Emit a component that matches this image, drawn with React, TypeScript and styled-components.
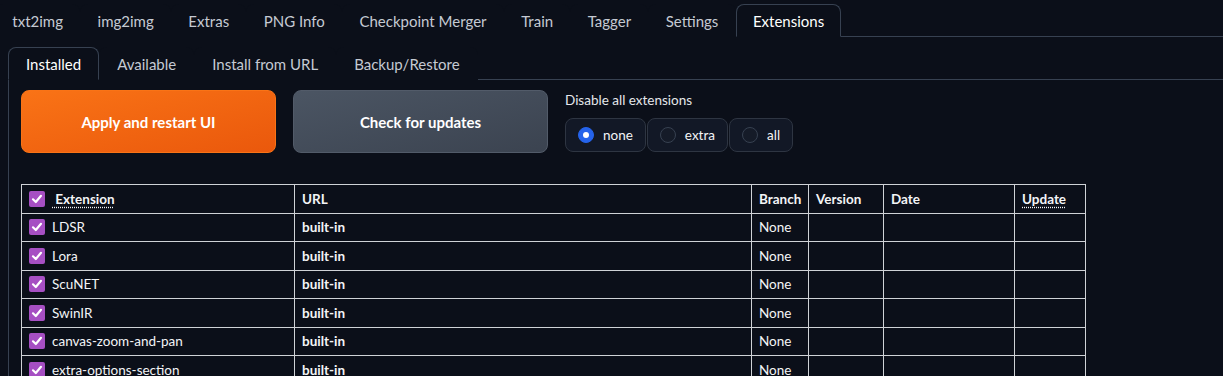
import React, { useState } from 'react'
import styled, { createGlobalStyle } from 'styled-components'

const GlobalStyle = createGlobalStyle`
  html, body {
    margin: 0;
    padding: 0;
    background: #0b0f19;
    overflow: hidden;
  }
  body {
    font-family: Lato, 'Liberation Sans', sans-serif;
    color: #f3f4f6;
  }
`

const Page = styled.div`
  width: 1223px;
  height: 376px;
  overflow: hidden;
  background: #0b0f19;
`

const TabNav = styled.div<{ $top?: boolean }>`
  display: flex;
  border-bottom: 1px solid #374151;
  padding-top: ${({ $top }) => ($top ? '4px' : '10px')};
  margin-left: ${({ $top }) => ($top ? '-5px' : '0')};
`

const Tab = styled.button<{ $active?: boolean; $pad: number }>`
  font-family: inherit;
  font-size: 15px;
  height: 33px;
  padding: 0 ${({ $pad }) => $pad}px;
  margin-bottom: -1px;
  background: #0b0f19;
  color: ${({ $active }) => ($active ? '#ffffff' : '#c5cad3')};
  border: 1px solid ${({ $active }) => ($active ? '#374151' : 'transparent')};
  border-bottom-color: ${({ $active }) => ($active ? '#0b0f19' : 'transparent')};
  border-radius: 8px 8px 0 0;
  cursor: pointer;
`

const SubArea = styled.div`
  padding-left: 8px;
`

const Panel = styled.div`
  border-left: 1px solid #374151;
  padding: 10px 12px 0 12px;
  height: 300px;
`

const TopRow = styled.div`
  display: flex;
  align-items: flex-start;
  gap: 17px;
`

const BigButton = styled.button<{ $primary?: boolean }>`
  width: 255px;
  height: 63px;
  border-radius: 8px;
  font-family: inherit;
  font-size: 15px;
  font-weight: 700;
  color: #ffffff;
  cursor: pointer;
  border: 1px solid ${({ $primary }) => ($primary ? '#f97316' : '#525b69')};
  background: ${({ $primary }) =>
    $primary
      ? 'linear-gradient(to bottom right, #f97316, #ea580c)'
      : 'linear-gradient(to bottom right, #4b5563, #3b4350)'};
`

const RadioBlock = styled.div`
  display: flex;
  flex-direction: column;
  gap: 10px;
  padding-top: 2px;
`

const RadioLabel = styled.div`
  font-size: 13.5px;
  color: #e5e7eb;
`

const RadioGroup = styled.div`
  display: flex;
  gap: 1px;
`

const RadioOption = styled.label`
  display: flex;
  align-items: center;
  gap: 9px;
  height: 34px;
  box-sizing: border-box;
  padding: 0 12px 0 12px;
  border: 1px solid #2e3542;
  border-radius: 8px;
  background: #121826;
  font-size: 13.5px;
  color: #f3f4f6;
  cursor: pointer;
`

const RadioDot = styled.span<{ $checked?: boolean }>`
  width: 16px;
  height: 16px;
  border-radius: 50%;
  box-sizing: border-box;
  display: flex;
  align-items: center;
  justify-content: center;
  background: ${({ $checked }) => ($checked ? '#2563eb' : '#151b28')};
  border: 1px solid ${({ $checked }) => ($checked ? '#2563eb' : '#374151')};
  &::after {
    content: '';
    display: ${({ $checked }) => ($checked ? 'block' : 'none')};
    width: 6px;
    height: 6px;
    border-radius: 50%;
    background: #ffffff;
  }
`

const Table = styled.table`
  margin-top: 31px;
  border-collapse: collapse;
  width: 1064px;
  table-layout: fixed;
  font-size: 13.5px;
  color: #f3f4f6;
`

const Th = styled.th<{ $w: number }>`
  box-sizing: border-box;
  width: ${({ $w }) => $w}px;
  border: 1px solid #cfd2d6;
  height: 28.5px;
  padding: 0 7px;
  text-align: left;
  font-weight: 700;
`

const Td = styled.td<{ $bold?: boolean }>`
  box-sizing: border-box;
  border: 1px solid #cfd2d6;
  height: 28.5px;
  padding: 0 7px;
  font-weight: ${({ $bold }) => ($bold ? 700 : 400)};
  white-space: nowrap;
`

const NameCell = styled.div`
  display: flex;
  align-items: center;
  gap: 7px;
`

const Abbr = styled.abbr`
  text-decoration: underline dotted;
  text-underline-offset: 3px;
`

const CheckBox = styled.span`
  width: 16px;
  height: 16px;
  border-radius: 2px;
  background: #a64fc3;
  display: inline-flex;
  align-items: center;
  justify-content: center;
  flex-shrink: 0;
`

const Check = () => (
  <CheckBox>
    <svg width="12" height="12" viewBox="0 0 12 12">
      <path d="M2 6.3 L4.8 9 L10 2.8" fill="none" stroke="#fff" strokeWidth="2.2" strokeLinecap="round" strokeLinejoin="round" />
    </svg>
  </CheckBox>
)

const topTabs = ['txt2img', 'img2img', 'Extras', 'PNG Info', 'Checkpoint Merger', 'Train', 'Tagger', 'Settings', 'Extensions']
const subTabs = ['Installed', 'Available', 'Install from URL', 'Backup/Restore']
const extensions = [
  'LDSR',
  'Lora',
  'ScuNET',
  'SwinIR',
  'canvas-zoom-and-pan',
  'extra-options-section',
  'hypertile',
  'mobile',
]

const App = () => {
  const [disable, setDisable] = useState('none')

  return (
    <Page>
      <GlobalStyle />
      <TabNav $top>
        {topTabs.map((t) => (
          <Tab key={t} $pad={16.3} $active={t === 'Extensions'}>{t}</Tab>
        ))}
      </TabNav>
      <SubArea>
        <TabNav>
          {subTabs.map((t) => (
            <Tab key={t} $pad={17} $active={t === 'Installed'}>{t}</Tab>
          ))}
        </TabNav>
        <Panel>
          <TopRow>
            <BigButton $primary>Apply and restart UI</BigButton>
            <BigButton>Check for updates</BigButton>
            <RadioBlock>
              <RadioLabel>Disable all extensions</RadioLabel>
              <RadioGroup>
                {['none', 'extra', 'all'].map((o) => (
                  <RadioOption key={o} onClick={() => setDisable(o)}>
                    <RadioDot $checked={disable === o} />
                    {o}
                  </RadioOption>
                ))}
              </RadioGroup>
            </RadioBlock>
          </TopRow>
          <Table>
            <thead>
              <tr>
                <Th $w={273}>
                  <NameCell>
                    <Check />
                    <Abbr title="Use checkbox to enable the extension">&nbsp;Extension</Abbr>
                  </NameCell>
                </Th>
                <Th $w={457}>URL</Th>
                <Th $w={57}>Branch</Th>
                <Th $w={75}>Version</Th>
                <Th $w={131}>Date</Th>
                <Th $w={71}>
                  <Abbr title="Use checkbox to mark the extension for update">Update</Abbr>
                </Th>
              </tr>
            </thead>
            <tbody>
              {extensions.map((e) => (
                <tr key={e}>
                  <Td>
                    <NameCell>
                      <Check />
                      {e}
                    </NameCell>
                  </Td>
                  <Td $bold>built-in</Td>
                  <Td>None</Td>
                  <Td />
                  <Td />
                  <Td />
                </tr>
              ))}
            </tbody>
          </Table>
        </Panel>
      </SubArea>
    </Page>
  )
}

export default App
